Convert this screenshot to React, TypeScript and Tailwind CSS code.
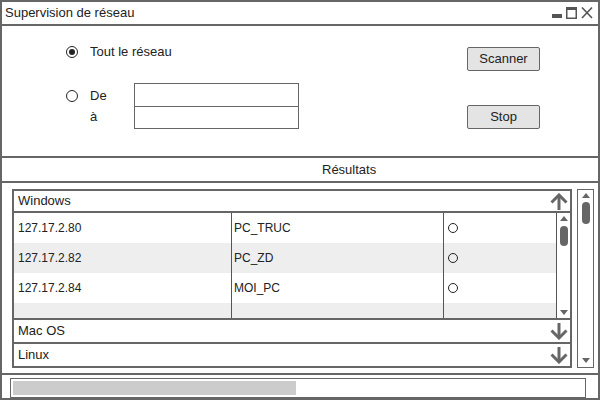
import React from "react";

const rows = [
  { ip: "127.17.2.80", name: "PC_TRUC" },
  { ip: "127.17.2.82", name: "PC_ZD" },
  { ip: "127.17.2.84", name: "MOI_PC" },
];

const TriUp = () => (
  <svg width="8" height="5" viewBox="0 0 8 5">
    <polygon points="0,5 4,0 8,5" fill="#666" />
  </svg>
);

const TriDown = () => (
  <svg width="8" height="5" viewBox="0 0 8 5">
    <polygon points="0,0 8,0 4,5" fill="#666" />
  </svg>
);

const ArrowUp = () => (
  <svg width="18" height="17" viewBox="0 0 18 17" fill="none" stroke="#666" strokeWidth="3">
    <path d="M9 2 V17" />
    <path d="M1.5 9.5 L9 2 L16.5 9.5" />
  </svg>
);

const ArrowDown = () => (
  <svg width="18" height="17" viewBox="0 0 18 17" fill="none" stroke="#666" strokeWidth="3">
    <path d="M9 0 V15" />
    <path d="M1.5 7.5 L9 15 L16.5 7.5" />
  </svg>
);

const Radio = ({ checked }: { checked?: boolean }) => (
  <span className="w-[12px] h-[12px] rounded-full border-[1.5px] border-[#222] flex items-center justify-center">
    {checked && <span className="w-[6px] h-[6px] rounded-full bg-[#222]" />}
  </span>
);

// accordion section header (Windows / Mac OS / Linux)
const Section = ({ label, up }: { label: string; up?: boolean }) => (
  <div
    className={
      "h-[24px] border-2 border-[#666] flex items-center justify-between pl-[4px] pr-[2px] text-[13px] " +
      (up ? "" : "border-t-0")
    }
  >
    <span>{label}</span>
    {up ? <ArrowUp /> : <ArrowDown />}
  </div>
);

export default function App() {
  return (
    <div className="w-[600px] h-[400px] bg-white border-2 border-[#666] flex flex-col text-[#222] font-['Liberation_Sans',Arial,sans-serif]">
      {/* title bar */}
      <div className="h-[24px] shrink-0 border-b-2 border-[#666] flex items-center justify-between pl-[3px] pr-[3px] text-[13px]">
        <span>Supervision de réseau</span>
        <svg width="44" height="14" viewBox="0 0 44 14">
          <rect x="1" y="8" width="10" height="4" fill="#555" />
          <rect x="15.75" y="1.75" width="9.5" height="10.5" fill="none" stroke="#555" strokeWidth="1.5" />
          <rect x="15" y="1" width="11" height="3" fill="#555" />
          <path d="M31 1.5 L41 12 M41 1.5 L31 12" stroke="#555" strokeWidth="1.6" />
        </svg>
      </div>

      {/* scan options */}
      <div className="h-[132px] shrink-0 border-b-2 border-[#666] flex justify-between text-[13px]">
        <div className="pt-[18px] pl-[64px] flex flex-col">
          <div className="h-[16px] flex items-center gap-[12px]">
            <Radio checked />
            <span>Tout le réseau</span>
          </div>
          <div className="mt-[23px] flex">
            <div className="w-[68px] flex flex-col">
              <div className="h-[24px] pt-[2px] flex items-center gap-[12px]">
                <Radio />
                <span>De</span>
              </div>
              <div className="h-[20px] pl-[24px] flex items-center">à</div>
            </div>
            <div className="flex flex-col">
              <div className="w-[165px] h-[24px] border border-[#666] bg-white" />
              <div className="w-[165px] h-[23px] -mt-px border border-[#666] bg-white" />
            </div>
          </div>
        </div>
        <div className="pt-[21px] pr-[58px] flex flex-col gap-[34px]">
          <button className="w-[73px] h-[24px] border border-[#666] rounded-[2px] bg-[#e4e4e4] text-[13px]">
            Scanner
          </button>
          <button className="w-[73px] h-[24px] border border-[#666] rounded-[2px] bg-[#e4e4e4] text-[13px]">
            Stop
          </button>
        </div>
      </div>

      {/* results header */}
      <div className="h-[25px] shrink-0 border-b-2 border-[#666] flex items-center pl-[320px] text-[13px]">
        Résultats
      </div>

      {/* results list */}
      <div className="h-[192px] shrink-0 border-b-2 border-[#666] flex gap-[5px] pt-[6px] pl-[10px]">
        <div className="w-[560px] flex flex-col">
          <Section label="Windows" up />
          <div className="h-[107px] border-x-2 border-b-2 border-[#666] flex text-[12px]">
            <div className="flex-1 flex flex-col">
              {rows.map((r, i) => (
                <div key={r.ip} className={"h-[30px] flex " + (i % 2 === 1 ? "bg-[#eeeeee]" : "bg-white")}>
                  <div className="w-[218px] border-r border-[#555] flex items-center pl-[4px]">{r.ip}</div>
                  <div className="w-[212px] border-r border-[#555] flex items-center pl-[2px]">{r.name}</div>
                  <div className="flex-1 flex items-center pl-[4px]">
                    <span className="w-[10px] h-[10px] rounded-full border border-[#222]" />
                  </div>
                </div>
              ))}
              <div className="flex-1 flex bg-[#eeeeee]">
                <div className="w-[218px] border-r border-[#555]" />
                <div className="w-[212px] border-r border-[#555]" />
                <div className="flex-1" />
              </div>
            </div>
            <div className="w-[14px] border-l border-[#555] flex flex-col items-center pt-[3px] pb-[3px]">
              <TriUp />
              <div className="mt-[5px] w-[8px] h-[20px] rounded-[4px] bg-[#666]" />
              <div className="flex-1" />
              <TriDown />
            </div>
          </div>
          <Section label="Mac OS" />
          <Section label="Linux" />
        </div>
        <div className="w-[17px] h-[179px] border border-[#666] flex flex-col items-center pt-[3px] pb-[4px]">
          <TriUp />
          <div className="mt-[4px] w-[8px] h-[22px] rounded-[4px] bg-[#666]" />
          <div className="flex-1" />
          <TriDown />
        </div>
      </div>

      {/* progress */}
      <div className="flex-1 pt-[3px] pl-[8px]">
        <div className="w-[576px] h-[20px] border border-[#666] p-[2px]">
          <div className="w-[283px] h-full bg-[#cccccc]" />
        </div>
      </div>
    </div>
  );
}
